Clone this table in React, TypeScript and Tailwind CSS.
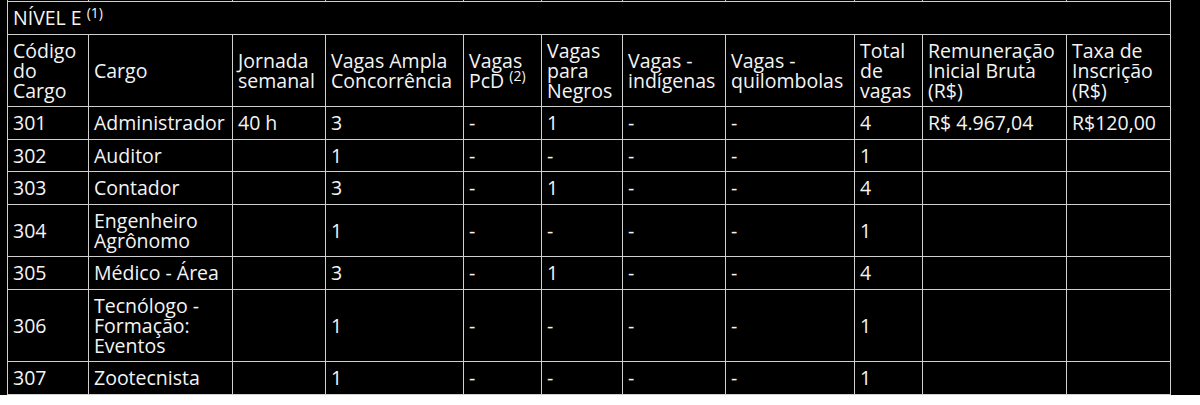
const cols = [81, 144, 93, 138, 78, 81, 103, 129, 68, 144, 104]

type Row = {
  code: string
  cargo: string[]
  jornada?: string
  ampla: string
  pcd: string
  negros: string
  ind: string
  quil: string
  total: string
  rem?: string
  taxa?: string
}

const rows: Row[] = [
  { code: '301', cargo: ['Administrador'], jornada: '40 h', ampla: '3', pcd: '-', negros: '1', ind: '-', quil: '-', total: '4', rem: 'R$ 4.967,04', taxa: 'R$120,00' },
  { code: '302', cargo: ['Auditor'], ampla: '1', pcd: '-', negros: '-', ind: '-', quil: '-', total: '1' },
  { code: '303', cargo: ['Contador'], ampla: '3', pcd: '-', negros: '1', ind: '-', quil: '-', total: '4' },
  { code: '304', cargo: ['Engenheiro', 'Agrônomo'], ampla: '1', pcd: '-', negros: '-', ind: '-', quil: '-', total: '1' },
  { code: '305', cargo: ['Médico - Área'], ampla: '3', pcd: '-', negros: '1', ind: '-', quil: '-', total: '4' },
  { code: '306', cargo: ['Tecnólogo -', 'Formação:', 'Eventos'], ampla: '1', pcd: '-', negros: '-', ind: '-', quil: '-', total: '1' },
  { code: '307', cargo: ['Zootecnista'], ampla: '1', pcd: '-', negros: '-', ind: '-', quil: '-', total: '1' },
]

const cell = 'border border-[#cfcfcf] px-[5px] pt-[6px] pb-[5.5px] align-middle text-left font-normal whitespace-nowrap'

function Lines({ items }: { items: string[] }) {
  return (
    <>
      {items.map((t, i) => (
        <div key={i}>{t}</div>
      ))}
    </>
  )
}

export default function App() {
  return (
    <div className="min-h-[405px] w-[1200px] bg-black pl-[7px] text-[#f4f4f4] [font-family:'Open_Sans','Liberation_Sans',sans-serif]">
      <table className="-mt-[20px] w-[1164px] table-fixed border-collapse text-[19.5px] leading-[20px]">
        <colgroup>
          {cols.map((w, i) => (
            <col key={i} style={{ width: w }} />
          ))}
        </colgroup>
        <tbody>
          <tr className="h-[21px]">
            {cols.map((_, i) => (
              <td key={i} className="border border-[#cfcfcf]" />
            ))}
          </tr>
          <tr>
            <td colSpan={11} className={cell}>
              NÍVEL E <sup className="text-[14px] leading-none">(1)</sup>
            </td>
          </tr>
          <tr>
            <th className={cell}><Lines items={['Código', 'do', 'Cargo']} /></th>
            <th className={cell}>Cargo</th>
            <th className={cell}><Lines items={['Jornada', 'semanal']} /></th>
            <th className={cell}><Lines items={['Vagas Ampla', 'Concorrência']} /></th>
            <th className={cell}>
              <div>Vagas</div>
              <div>PcD <sup className="text-[14px] leading-none">(2)</sup></div>
            </th>
            <th className={cell}><Lines items={['Vagas', 'para', 'Negros']} /></th>
            <th className={cell}><Lines items={['Vagas -', 'indígenas']} /></th>
            <th className={cell}><Lines items={['Vagas -', 'quilombolas']} /></th>
            <th className={cell}><Lines items={['Total', 'de', 'vagas']} /></th>
            <th className={cell}><Lines items={['Remuneração', 'Inicial Bruta', '(R$)']} /></th>
            <th className={cell}><Lines items={['Taxa de', 'Inscrição', '(R$)']} /></th>
          </tr>
          {rows.map((r) => (
            <tr key={r.code}>
              <td className={cell}>{r.code}</td>
              <td className={cell}><Lines items={r.cargo} /></td>
              <td className={cell}>{r.jornada ?? ''}</td>
              <td className={cell}>{r.ampla}</td>
              <td className={cell}>{r.pcd}</td>
              <td className={cell}>{r.negros}</td>
              <td className={cell}>{r.ind}</td>
              <td className={cell}>{r.quil}</td>
              <td className={cell}>{r.total}</td>
              <td className={cell}>{r.rem ?? ''}</td>
              <td className={cell}>{r.taxa ?? ''}</td>
            </tr>
          ))}
        </tbody>
      </table>
    </div>
  )
}
